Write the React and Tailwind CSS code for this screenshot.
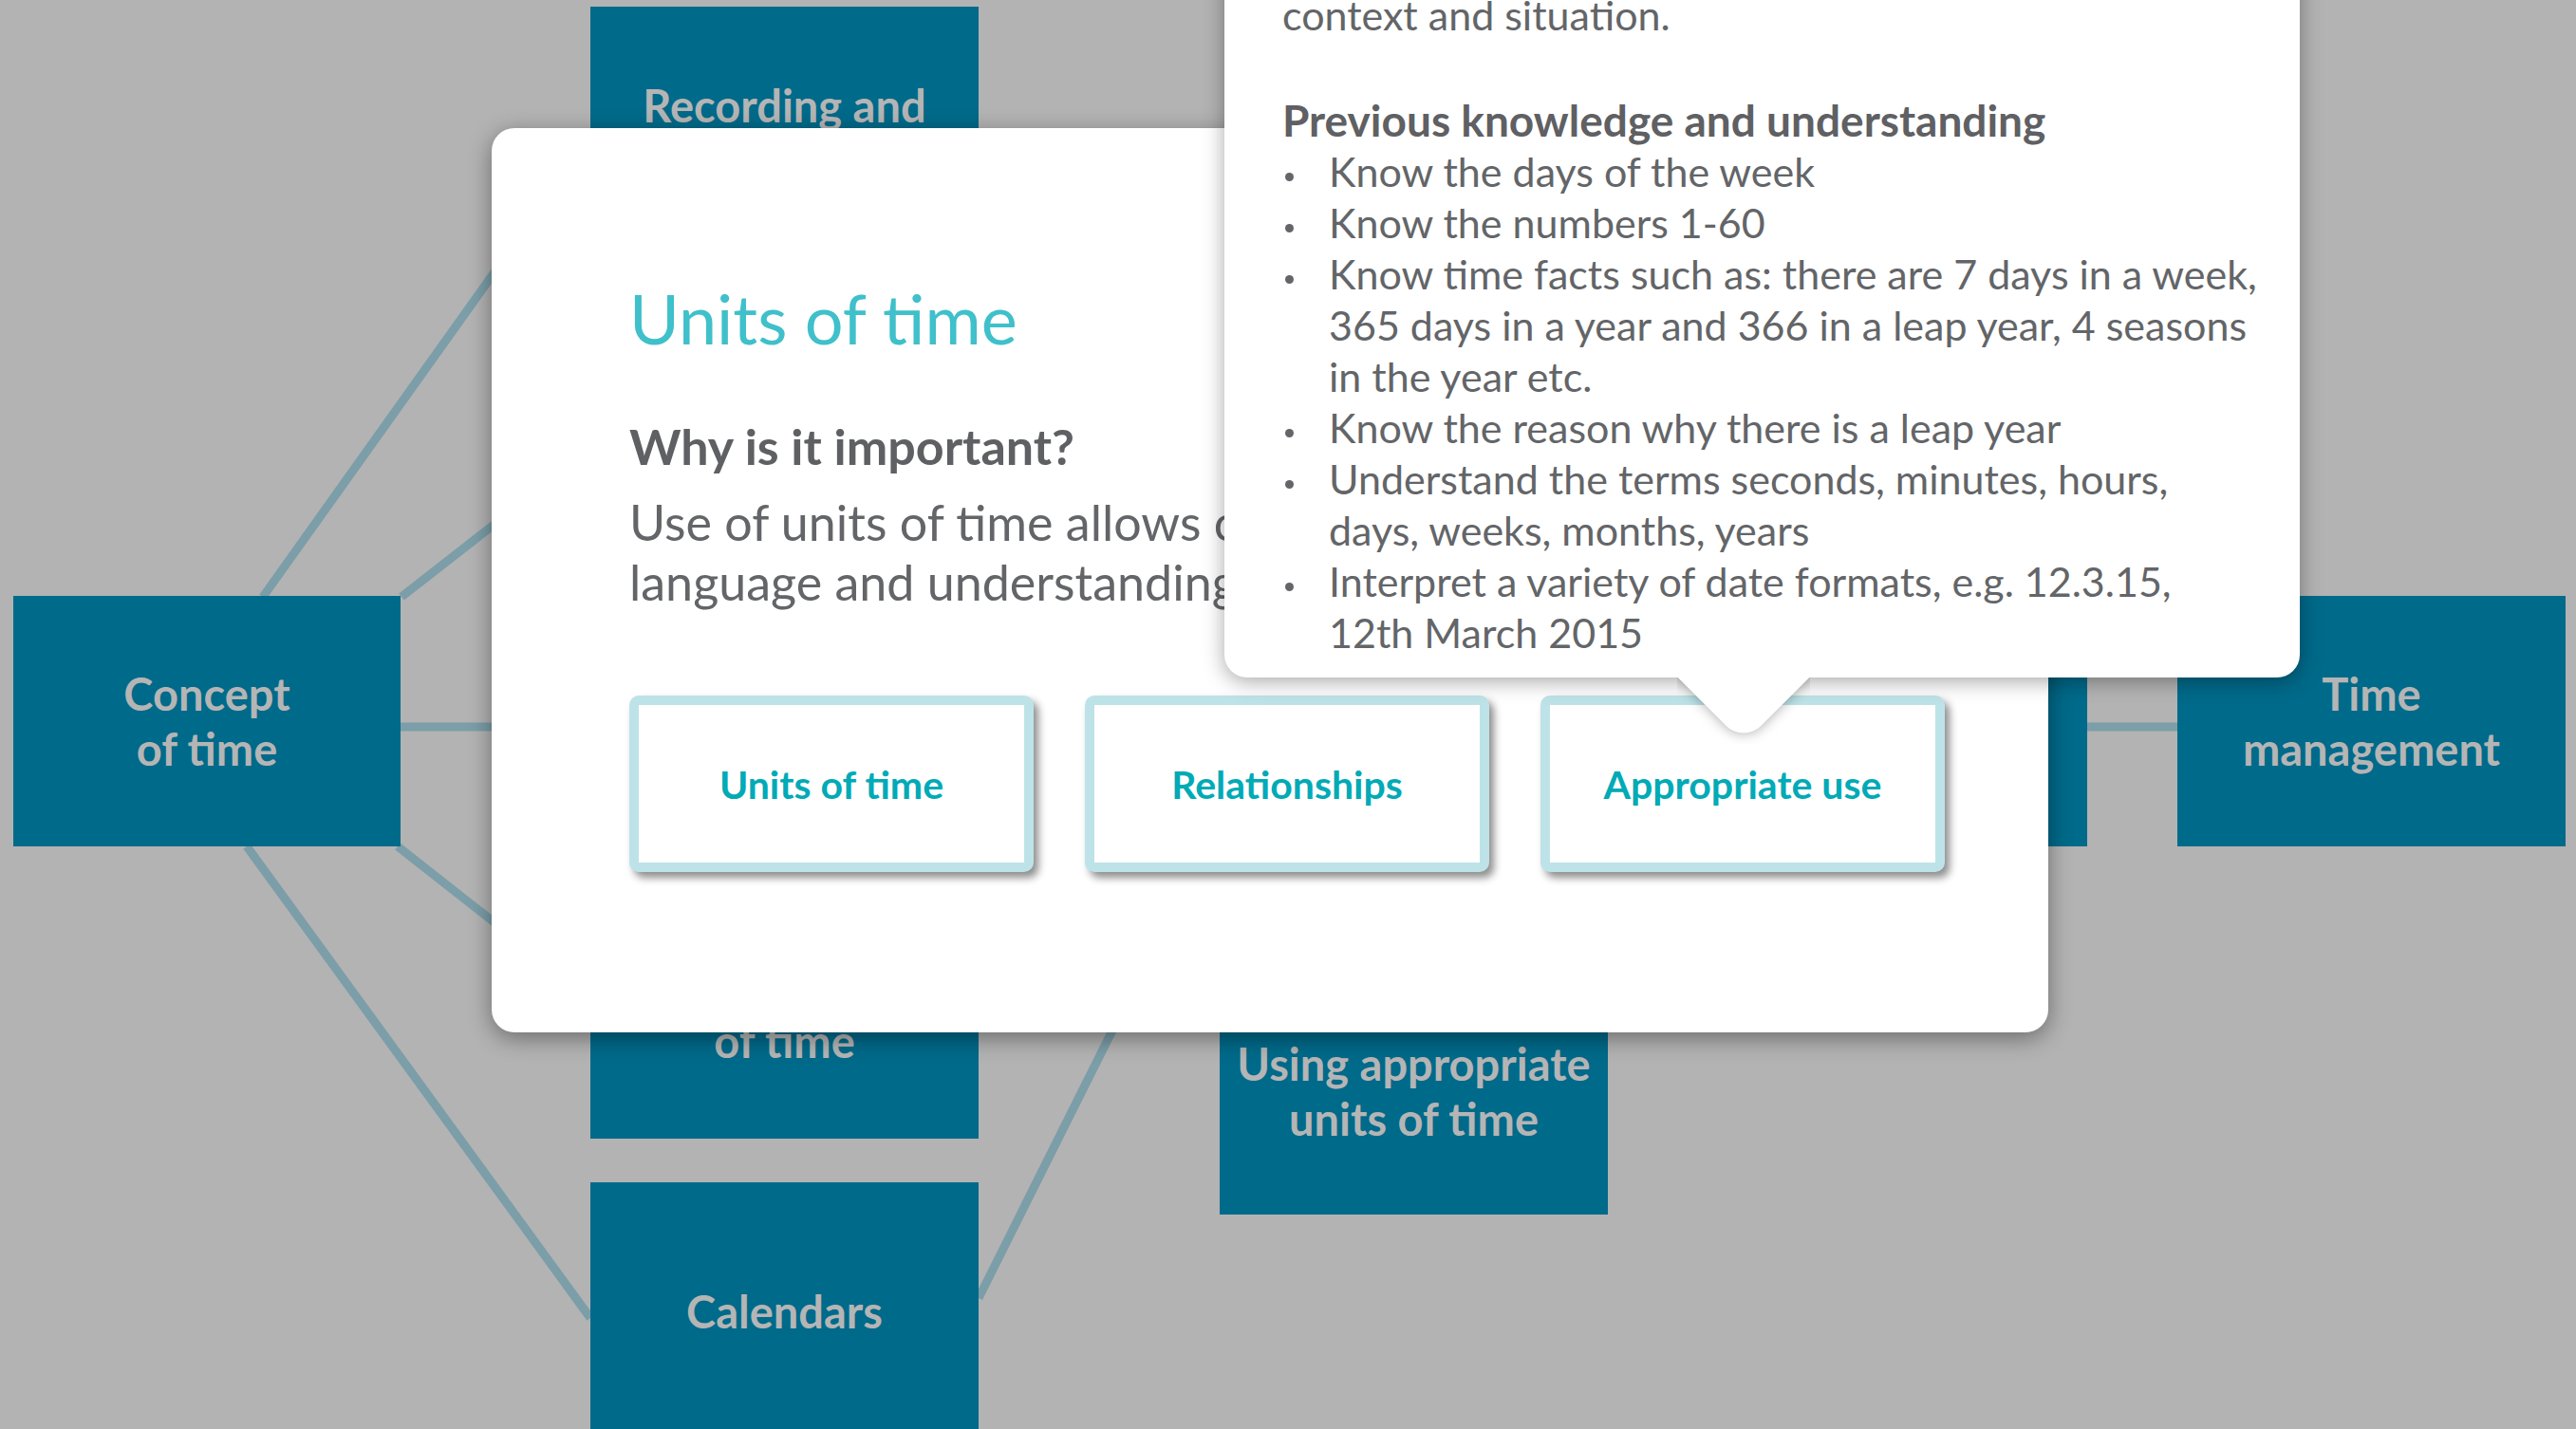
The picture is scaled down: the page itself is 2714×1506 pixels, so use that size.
import React from 'react';

const nodes = [
  { pos: 'left-[622px] top-[7px] w-[409px] h-[265px]', lines: ['Recording and', 'reading time'] },
  { pos: 'left-[14px] top-[628px] w-[408px] h-[264px]', lines: ['Concept', 'of time'] },
  { pos: 'left-[622px] top-[935px] w-[409px] h-[265px]', lines: ['Passing', 'of time'] },
  { pos: 'left-[622px] top-[1246px] w-[409px] h-[272px]', lines: ['Calendars'] },
  { pos: 'left-[1285px] top-[1020px] w-[409px] h-[260px]', lines: ['Using appropriate', 'units of time'] },
  { pos: 'left-[1790px] top-[628px] w-[409px] h-[264px]', lines: ['Relationships', 'between units'] },
  { pos: 'left-[2294px] top-[628px] w-[409px] h-[264px]', lines: ['Time', 'management'] },
];

const links = [
  [277, 629, 590, 190],
  [423, 629, 560, 522],
  [422, 766, 560, 766],
  [419, 892, 560, 1003],
  [260, 892, 622, 1389],
  [1031, 1368, 1200, 1030],
  [2199, 766, 2294, 766],
];

const knowledge = [
  ['Know the days of the week'],
  ['Know the numbers 1-60'],
  [
    'Know time facts such as: there are 7 days in a week,',
    '365 days in a year and 366 in a leap year, 4 seasons',
    'in the year etc.',
  ],
  ['Know the reason why there is a leap year'],
  ['Understand the terms seconds, minutes, hours,', 'days, weeks, months, years'],
  ['Interpret a variety of date formats, e.g. 12.3.15,', '12th March 2015'],
];

const cards = ['Units of time', 'Relationships', 'Appropriate use'];

const Node = ({ pos, lines }) => (
  <div className={`absolute ${pos} bg-[#006a8a] flex flex-col items-center justify-center text-center`}>
    {lines.map((l) => (
      <span key={l} className="text-[47px] leading-[58px] font-bold text-[#b5b5b5]">
        {l}
      </span>
    ))}
  </div>
);

const Popover = () => (
  <div className="absolute left-[1290px] bottom-[792px] w-[1133px] bg-white rounded-[24px] shadow-[0_4px_22px_rgba(0,0,0,0.35)] pl-[61px] pr-[20px] pb-[20px] text-[#636568]">
    <p className="text-[43px] leading-[54px] whitespace-nowrap">
      Children should choose the most appropriate unit of time for the
      <br />
      context and situation.
    </p>
    <h4 className="mt-[57px] text-[46px] leading-[54px] font-bold text-[#5f6063]">
      Previous knowledge and understanding
    </h4>
    <ul>
      {knowledge.map((item) => (
        <li key={item[0]} className="flex text-[43px] leading-[54px]">
          <span className="w-[49px] shrink-0 flex items-start pt-[28px] pl-[3px]">
            <span className="w-[9px] h-[9px] rounded-full bg-[#636568]" />
          </span>
          <span className="whitespace-nowrap">
            {item.map((l, i) => (
              <React.Fragment key={l}>
                {i > 0 && <br />}
                {l}
              </React.Fragment>
            ))}
          </span>
        </li>
      ))}
    </ul>
    <div className="absolute left-[477px] top-full w-[140px] h-[70px] overflow-hidden">
      <div className="absolute left-[21px] top-[-49px] w-[98px] h-[98px] bg-white rotate-45 rounded-br-[26px] shadow-[0_0_14px_rgba(0,0,0,0.35)]" />
    </div>
  </div>
);

const Modal = () => (
  <div className="absolute left-[518px] top-[135px] w-[1640px] h-[953px] bg-white rounded-[24px] shadow-[0_6px_24px_rgba(0,0,0,0.4)] pl-[145px] pr-[100px] pt-[157px]">
    <h2 className="text-[72px] leading-[1.2] text-[#3fc0ca]">Units of time</h2>
    <h3 className="mt-[61px] text-[52px] leading-[63px] font-bold text-[#5f6063]">Why is it important?</h3>
    <p className="mt-[17px] text-[52px] leading-[63px] text-[#636568] whitespace-nowrap">
      Use of units of time allows children to develop their
      <br />
      language and understanding of time in context and situation.
    </p>
    <div className="mt-[88px] flex gap-[54px]">
      {cards.map((c) => (
        <button
          key={c}
          className="shrink-0 w-[426px] h-[186px] rounded-[10px] border-[10px] border-[#bde3e8] bg-white shadow-[5px_6px_8px_rgba(0,0,0,0.45)] flex items-center justify-center text-[41px] font-bold text-[#00aab6]"
        >
          {c}
        </button>
      ))}
    </div>
  </div>
);

export default function App() {
  return (
    <div className="relative w-[2714px] h-[1506px] overflow-hidden bg-[#b3b3b3] font-['Lato','Noto_Sans',sans-serif]">
      <svg className="absolute inset-0" width="2714" height="1506">
        {links.map(([x1, y1, x2, y2], i) => (
          <line key={i} x1={x1} y1={y1} x2={x2} y2={y2} stroke="#7b9ea8" strokeWidth="9" />
        ))}
      </svg>
      {nodes.map((n) => (
        <Node key={n.pos} {...n} />
      ))}
      <Modal />
      <Popover />
    </div>
  );
}
